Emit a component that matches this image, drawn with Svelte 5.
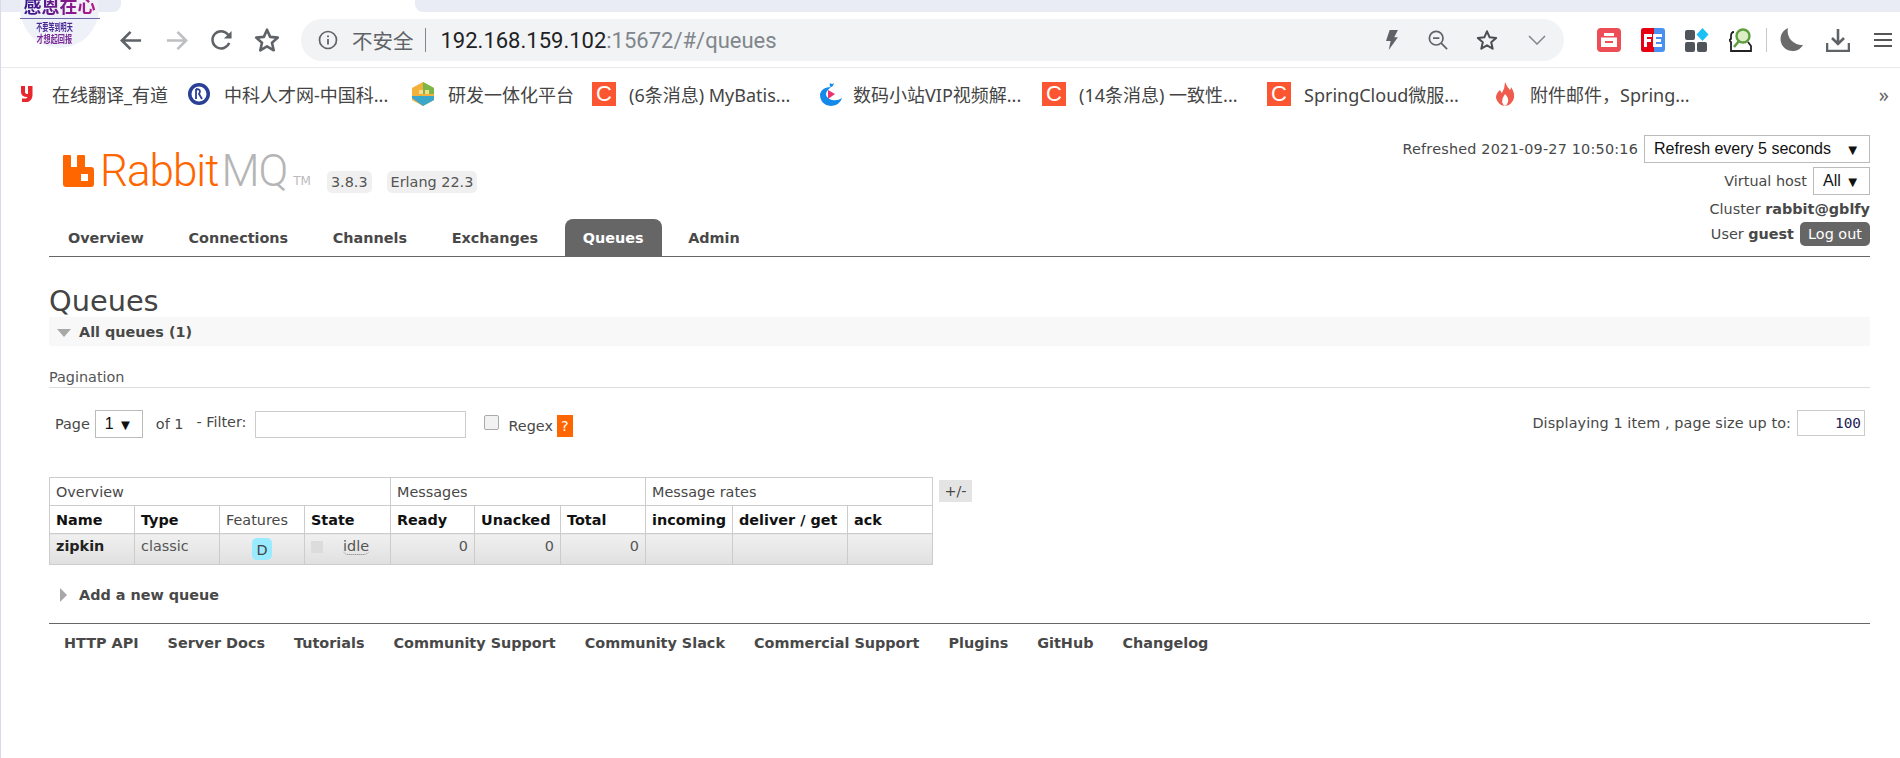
<script>
  const bookmarks = [
    { icon: "youdao", label: "在线翻译_有道", w: 167 },
    { icon: "seal", label: "中科人才网-中国科...", w: 224 },
    { icon: "cube", label: "研发一体化平台", w: 181 },
    { icon: "csdn", label: "(6条消息) MyBatis...", w: 227 },
    { icon: "fish", label: "数码小站VIP视频解...", w: 223 },
    { icon: "csdn", label: "(14条消息) 一致性...", w: 225 },
    { icon: "csdn", label: "SpringCloud微服...", w: 226 },
    { icon: "flame", label: "附件邮件，Spring...", w: 192 },
  ];

  const tabs = ["Overview", "Connections", "Channels", "Exchanges", "Queues", "Admin"];
  const footerLinks = [
    "HTTP API",
    "Server Docs",
    "Tutorials",
    "Community Support",
    "Community Slack",
    "Commercial Support",
    "Plugins",
    "GitHub",
    "Changelog",
  ];
</script>

<div class="shell">
  <div class="avatar">
    <span class="avatar-top">感恩在心</span>
    <span class="avatar-line">不要等到明天</span>
    <span class="avatar-line second">才想起回报</span>
  </div>

  <div class="tabstrip">
    <div class="strip-tab"></div>
    <div class="strip-rest"></div>
  </div>

  <div class="toolbar">
    <svg class="nav back" viewBox="0 0 24 24"><path d="M22 12H3M11 3l-9 9 9 9" fill="none" stroke="#5f6368" stroke-width="2.8" /></svg>
    <svg class="nav forward" viewBox="0 0 24 24"><path d="M2 12h19M13 3l9 9-9 9" fill="none" stroke="#bdbfc2" stroke-width="2.8" /></svg>
    <svg class="nav reload" viewBox="0 0 24 24"><path d="M20 14.5A9 9 0 1 1 18.5 5.5L21 8" fill="none" stroke="#5f6368" stroke-width="2.6" /><path d="M22.5 2v8h-8z" fill="#5f6368" /></svg>
    <svg class="nav star" viewBox="0 0 24 24"><path d="M12 2.5l2.9 6.6 7.1.7-5.4 4.7 1.6 7-6.2-3.7-6.2 3.7 1.6-7L2 9.800l7.100-.7z" fill="none" stroke="#5f6368" stroke-width="2.4" stroke-linejoin="round" /></svg>

    <div class="omnibox">
      <svg class="info" viewBox="0 0 20 20"><circle cx="10" cy="10" r="8.500" fill="none" stroke="#5f6368" stroke-width="1.700" /><path d="M10 9v5.500M10 5.500v1.800" stroke="#5f6368" stroke-width="1.800" /></svg>
      <span class="insecure">不安全</span>
      <span class="sep"></span>
      <span class="url"><span class="host">192.168.159.102</span>:15672/#/queues</span>
      <svg class="omni-icon bolt" viewBox="0 0 16 24"><path d="M6 1h9l-4 8h4L5 23l2-10H2z" fill="#5f6368" /></svg>
      <svg class="omni-icon zoom" viewBox="0 0 22 22"><circle cx="9" cy="9" r="7.500" fill="none" stroke="#5f6368" stroke-width="1.900" /><path d="M5.500 9h7M14.500 14.500L21 21" stroke="#5f6368" stroke-width="1.900" /></svg>
      <svg class="omni-icon ostar" viewBox="0 0 24 24"><path d="M12 2.500l2.900 6.600 7.100.7-5.400 4.700 1.600 7-6.200-3.700-6.200 3.700 1.600-7L2 9.800l7.100-.7z" fill="none" stroke="#4b4e52" stroke-width="2.200" stroke-linejoin="round" /></svg>
      <svg class="omni-icon chev" viewBox="0 0 18 10"><path d="M1 1l8 8 8-8" fill="none" stroke="#80868b" stroke-width="1.500" /></svg>
    </div>

    <div class="extensions">
      <svg viewBox="0 0 24 24"><rect width="24" height="24" rx="4" fill="#ee4d58" /><path d="M7 5h10v3H7zM4 9.500h16V19H4z" fill="#fff" /><path d="M8 14h8" stroke="#ee4d58" stroke-width="2" /></svg>
      <svg class="fe" viewBox="0 0 24 24"><rect width="24" height="24" rx="3" fill="#4a90f0" /><path d="M3 0h10v24H3a3 3 0 0 1-3-3V3a3 3 0 0 1 3-3z" fill="#e60012" /><path d="M3 6h8v3H6v2h4v3H6v5H3z" fill="#fff" /><path d="M12 6h9v3h-6v2h5v3h-5v2h6v3h-9z" fill="#fff" /></svg>
      <svg viewBox="0 0 24 24"><rect x="0" y="2" width="10" height="10" rx="2" fill="#50555b" /><rect x="0" y="14" width="10" height="10" rx="2" fill="#50555b" /><rect x="12" y="14" width="10" height="10" rx="2" fill="#50555b" /><path d="M17.500 0l6 6.500-6 6.500-6-6.500z" fill="#1cc0f5" /></svg>
      <svg viewBox="0 0 24 24"><circle cx="14" cy="8" r="6.500" fill="#dcedc8" stroke="#5f9e3f" stroke-width="2.400" /><path d="M10 13l-5 6" stroke="#5f9e3f" stroke-width="2.600" /><path d="M5 4Q2 4 2 8v3l-2 1 2 2v9h20v-5l-3-4" fill="none" stroke="#222" stroke-width="1.800" /></svg>
      <span class="ext-sep"></span>
      <svg class="moon" viewBox="0 0 24 24"><path d="M9 0a12 12 0 1 0 15 17A14 14 0 0 1 9 0z" fill="#6b6b6b" /></svg>
      <svg viewBox="0 0 24 24"><path d="M1 15v8h22v-8M12 1v14M6 10l6 6 6-6" fill="none" stroke="#5f6368" stroke-width="2.600" /></svg>
      <svg class="burger" viewBox="0 0 18 16"><path d="M0 2h18M0 8h18M0 14h18" stroke="#555" stroke-width="2.200" /></svg>
    </div>
  </div>

  <div class="bookmarks">
    {#each bookmarks as b}
      <div class="bookmark" style="width: {b.w}px">
        {#if b.icon === "youdao"}
          <svg class="bm-icon" viewBox="0 0 16 16"><path d="M1 0h4v6q0 2 3 2V0h4.500v9Q12.500 14 8 16H2v-3.500h4Q7 12 7.500 11 1 11 1 6z" fill="#e8262d" /></svg>
        {:else if b.icon === "seal"}
          <svg class="bm-icon large" viewBox="0 0 24 24"><circle cx="12" cy="12" r="11" fill="#2a3f96" /><circle cx="12" cy="12" r="7.500" fill="#fff" /><path d="M9 7v10M9 7q6 0 3 5l3 5" fill="none" stroke="#2a3f96" stroke-width="1.800" /></svg>
        {:else if b.icon === "cube"}
          <svg class="bm-icon large" viewBox="0 0 24 24"><path d="M12 0l11 6v12l-11 6-11-6V6z" fill="#f1b13a" /><path d="M12 0l11 6v6H12z" fill="#7ab648" /><path d="M1 16l11 8 11-6v-4H1z" fill="#3aa6c9" /><path d="M8 8h4v4H8zM14 8h4v4h-4z" fill="#f6dc8c" /></svg>
        {:else if b.icon === "csdn"}
          <span class="csdn">C</span>
        {:else if b.icon === "fish"}
          <svg class="bm-icon large fish" viewBox="0 0 24 24"><path d="M11 1q-1 3 1 4 Q3 5 1 12q0 11 11 12 9-1 11-8-4 3-10 2Q7 16 7 12q0-3 5-7 2 0 3-4-2 2-4 0z" fill="#1389ea" /><path d="M9 8l7 4-7 5z" fill="#e8336c" /></svg>
        {:else}
          <svg class="bm-icon large" viewBox="0 0 24 24"><path d="M12 0q2 5 5 8 1-1 1-3 4 6 3 11-2 7-9 8-7-1-9-8 0-5 4-8 1 2 2 3 3-5 3-11z" fill="#ef5b4c" /><path d="M12 12q4 4 3 8-1 3-3 4-2-1-3-4 0-4 3-8z" fill="#fff" /></svg>
        {/if}
        <span class="bm-label">{b.label}</span>
      </div>
    {/each}
    <span class="more">»</span>
  </div>

  <main class="page">
    <header class="head">
      <div class="brand">
        <svg class="mark" viewBox="0 0 31 32"><path fill-rule="evenodd" d="M0 1q0-1 1-1h6q1 0 1 1v11h6V1q0-1 1-1h6q1 0 1 1v11h6q3 0 3 3v14q0 3-3 3H3q-3 0-3-3zM18 19h7v7h-7z" fill="#f60" /></svg>
        <span class="word"><span class="rabbit">Rabbit</span><span class="mq">MQ</span></span>
        <span class="tm">TM</span>
        <span class="badge first">3.8.3</span>
        <span class="badge">Erlang 22.3</span>
      </div>
      <div class="status">
        <div class="status-row">
          <span class="refreshed">Refreshed 2021-09-27 10:50:16</span>
          <div class="pick refresh"><span>Refresh every 5 seconds</span><i>▼</i></div>
        </div>
        <div class="status-row">
          <span>Virtual host</span>
          <div class="pick vhost"><span>All</span><i>▼</i></div>
        </div>
        <div class="status-row cluster">Cluster&nbsp;<b>rabbit@gblfy</b></div>
        <div class="status-row user">
          <span>User&nbsp;<b>guest</b></span>
          <span class="logout">Log out</span>
        </div>
      </div>
    </header>

    <nav class="tabs">
      {#each tabs as t}
        <span class="tab" class:active={t === "Queues"}>{t}</span>
      {/each}
    </nav>

    <h1>Queues</h1>
    <div class="section-bar"><span class="tri-down"></span>All queues (1)</div>

    <div class="pagination-label">Pagination</div>

    <div class="filters">
      <span>Page</span>
      <div class="pick page-pick"><span>1</span><i>▼</i></div>
      <span class="of">of 1</span>
      <span class="filter-label">- Filter:</span>
      <div class="input filter"></div>
      <span class="check"></span>
      <span class="regex">Regex</span>
      <span class="help">?</span>
      <span class="displaying">Displaying 1 item , page size up to:</span>
      <div class="input size">100</div>
    </div>

    <div class="table-wrap">
      <table>
        <colgroup>
          <col style="width: 85px" /><col style="width: 85px" /><col style="width: 85px" /><col style="width: 86px" />
          <col style="width: 84px" /><col style="width: 86px" /><col style="width: 85px" />
          <col style="width: 87px" /><col style="width: 115px" /><col style="width: 85px" />
        </colgroup>
        <thead>
          <tr class="group">
            <th colspan="4">Overview</th>
            <th colspan="3">Messages</th>
            <th colspan="3">Message rates</th>
          </tr>
          <tr class="cols">
            <th>Name</th>
            <th>Type</th>
            <th class="plain">Features</th>
            <th>State</th>
            <th>Ready</th>
            <th>Unacked</th>
            <th>Total</th>
            <th>incoming</th>
            <th>deliver / get</th>
            <th>ack</th>
          </tr>
        </thead>
        <tbody>
          <tr>
            <td class="name">zipkin</td>
            <td>classic</td>
            <td class="center"><span class="feature">D</span></td>
            <td class="state"><span class="dot"></span><span class="idle">idle</span></td>
            <td class="num">0</td>
            <td class="num">0</td>
            <td class="num">0</td>
            <td></td>
            <td></td>
            <td></td>
          </tr>
        </tbody>
      </table>
      <span class="plus-minus">+/-</span>
    </div>

    <div class="add-queue"><span class="tri-right"></span>Add a new queue</div>

    <footer>
      {#each footerLinks as link}
        <span>{link}</span>
      {/each}
    </footer>
  </main>
</div>

<style>
  :global(body) {
    margin: 0;
    background: #fff;
  }

  .shell {
    position: relative;
    height: 758px;
    overflow: hidden;
    border-left: 1px solid #d8dbe6;
    box-sizing: border-box;
    font-family: "DejaVu Sans", Verdana, sans-serif;
    font-size: 14.4px;
    color: #484848;
  }

  /* profile picture hangs over the tab strip */
  .avatar {
    position: absolute;
    left: 19px;
    top: -31px;
    width: 79px;
    height: 79px;
    border-radius: 50%;
    background: #eef1f8;
    display: flex;
    flex-direction: column;
    align-items: center;
    color: #4a2a96;
    font-family: "Noto Sans CJK SC", sans-serif;
    font-weight: 700;
    font-size: 10.5px;
    line-height: 12px;
    z-index: 2;
  }

  .avatar-top {
    margin-top: 24px;
    margin-bottom: 2px;
    padding: 0 4px 1px;
    font-size: 18px;
    line-height: 24px;
    white-space: nowrap;
    background: linear-gradient(90deg, #2a1a8a, #c0188a);
    -webkit-background-clip: text;
    background-clip: text;
    color: transparent;
    border-bottom: 1px solid #6a6aa8;
  }

  .avatar-line {
    white-space: nowrap;
    margin-right: 10px;
    transform: scaleX(0.58);
  }

  .avatar-line.second {
    color: #7a2a96;
    transform: scaleX(0.68);
  }

  .tabstrip {
    display: flex;
    height: 12px;
  }

  .strip-tab {
    width: 120px;
    background: #e9ecf4;
    border-bottom-right-radius: 8px;
  }

  .strip-rest {
    flex: 1;
    margin-left: 294px;
    background: #e9ecf4;
    border-bottom-left-radius: 8px;
  }

  .toolbar {
    position: relative;
    display: flex;
    align-items: center;
    height: 56px;
    box-sizing: border-box;
    border-bottom: 1px solid #e9e9e9;
    padding-left: 119px;
    font-family: "Noto Sans", "Noto Sans CJK SC", sans-serif;
  }

  .nav {
    width: 23px;
    height: 23px;
    flex: none;
    margin-top: 1px;
  }

  .forward {
    margin-left: 22px;
  }

  .reload {
    margin-left: 22px;
  }

  .star {
    margin-left: 21px;
    width: 26px;
    height: 26px;
  }

  .omnibox {
    display: flex;
    align-items: center;
    width: 1263px;
    height: 42px;
    margin-left: 21px;
    margin-top: 1px;
    border-radius: 21px;
    background: #f1f3f4;
    flex: none;
  }

  .info {
    width: 20px;
    height: 20px;
    margin-left: 17px;
  }

  .insecure {
    margin-left: 14px;
    font-family: "Noto Sans CJK SC", sans-serif;
    font-size: 20.5px;
    color: #5f6368;
  }

  .sep {
    width: 1px;
    height: 24px;
    margin: 0 15px 0 11px;
    background: #80868b;
  }

  .url {
    font-family: Roboto, "Noto Sans", sans-serif;
    font-size: 22px;
    color: #80868b;
    flex: 1;
    white-space: nowrap;
  }

  .host {
    color: #202124;
  }

  .omni-icon {
    flex: none;
  }

  .bolt {
    width: 15px;
    height: 22px;
    margin-right: 29px;
  }

  .zoom {
    width: 20px;
    height: 20px;
    margin-right: 28px;
  }

  .ostar {
    width: 22px;
    height: 22px;
    margin-right: 30px;
  }

  .chev {
    width: 18px;
    height: 10px;
    margin-right: 18px;
  }

  .extensions {
    display: flex;
    align-items: center;
    margin-left: 33px;
    gap: 20px;
  }

  .extensions svg {
    width: 24px;
    height: 24px;
    flex: none;
  }

  .extensions .moon {
    margin-right: 3px;
  }

  .extensions .burger {
    width: 18px;
    height: 16px;
    margin-left: 4px;
  }

  .ext-sep {
    width: 1px;
    height: 24px;
    margin: 0 -8px 0 -7px;
    background: #c8c8c8;
  }

  .bookmarks {
    display: flex;
    align-items: center;
    height: 52px;
    padding-left: 19px;
    font-family: "Noto Sans", "Noto Sans CJK SC", sans-serif;
    font-size: 18px;
    color: #444;
    position: relative;
  }

  .bookmark {
    display: flex;
    align-items: center;
    flex: none;
    white-space: nowrap;
  }

  .bm-icon {
    width: 16px;
    height: 16px;
    flex: none;
    margin-right: 16px;
  }

  .bm-icon.large {
    width: 24px;
    height: 24px;
    margin-right: 13px;
  }

  .bm-icon.large.fish {
    margin-right: 10px;
  }

  .csdn {
    width: 24px;
    height: 24px;
    margin-right: 13px;
    flex: none;
    background: #fc5531;
    color: #fff;
    text-align: center;
    font-size: 22px;
    line-height: 24px;
    font-family: "Liberation Sans", sans-serif;
  }

  .more {
    margin-left: auto;
    margin-right: 11px;
    font-size: 20px;
    color: #666;
  }

  .page {
    padding: 0 30px 0 48px;
  }

  .head {
    display: flex;
    justify-content: space-between;
    align-items: flex-start;
    height: 99px;
    padding-top: 16px;
    box-sizing: border-box;
    margin-top: -1px;
  }

  .brand {
    display: flex;
    align-items: flex-end;
    margin: 16px 0 0 14px;
    height: 41px;
  }

  .mark {
    width: 31px;
    height: 32px;
    flex: none;
    margin-bottom: 5px;
  }

  .word {
    margin-left: 6px;
    font-family: Roboto, "Liberation Sans", sans-serif;
    font-weight: 300;
    font-size: 44px;
    line-height: 41px;
    letter-spacing: -1px;
  }

  .rabbit {
    color: #f60;
  }

  .mq {
    color: #b5b5b5;
    margin-left: 3px;
  }

  .tm {
    margin: 0 0 5px 6px;
    font-size: 12px;
    line-height: 11px;
    color: #bbb;
  }

  .badge {
    margin-left: 15px;
    padding: 0 4px;
    height: 22px;
    line-height: 22px;
    border-radius: 5px;
    background: #f0f0f0;
    font-size: 14.4px;
    color: #555;
    position: relative;
    top: 1px;
  }

  .badge.first {
    margin-left: 16px;
  }

  .status {
    display: flex;
    flex-direction: column;
    align-items: flex-end;
  }

  .status-row {
    display: flex;
    align-items: center;
    justify-content: flex-end;
    gap: 6px;
  }

  .status-row + .status-row {
    margin-top: 4px;
  }

  .status-row.cluster {
    gap: 0;
    margin-top: 3px;
    height: 21px;
  }

  .status-row.user {
    margin-top: 3px;
  }

  .refreshed {
    letter-spacing: 0.2px;
  }

  .pick {
    display: flex;
    align-items: center;
    justify-content: space-between;
    box-sizing: border-box;
    height: 28px;
    border: 1px solid #bbb;
    background: #fff;
    font-family: "Liberation Sans", Arial, sans-serif;
    font-size: 16px;
    color: #111;
    padding: 0 9px;
  }

  .pick i {
    font-style: normal;
    font-size: 15px;
  }

  .refresh {
    width: 226px;
  }

  .vhost {
    width: 57px;
  }

  .page-pick {
    width: 48px;
    margin-left: 5px;
  }

  .logout {
    width: 70px;
    height: 24px;
    line-height: 24px;
    text-align: center;
    border-radius: 5px;
    background: #666;
    color: #fff;
  }

  .tabs {
    display: flex;
    align-items: flex-end;
    height: 38px;
    border-bottom: 1px solid #666;
    gap: 8.6px;
    padding-left: 1px;
  }

  .tab {
    height: 37px;
    line-height: 38px;
    padding: 0 18px;
    font-weight: 700;
    border-radius: 8px 8px 0 0;
    color: #484848;
  }

  .tab.active {
    background: #666;
    color: #fff;
  }

  h1 {
    margin: 29px 0 0;
    font-size: 28.8px;
    line-height: 31px;
    font-weight: 400;
    color: #444;
  }

  .section-bar {
    display: flex;
    align-items: center;
    height: 29px;
    background: #f8f8f8;
    font-weight: 700;
  }

  .tri-down {
    width: 0;
    height: 0;
    margin: 2px 8px 0 8px;
    border-left: 7px solid transparent;
    border-right: 7px solid transparent;
    border-top: 8px solid #a8a8a8;
  }

  .pagination-label {
    margin-top: 22px;
    height: 19px;
    line-height: 19px;
    border-bottom: 1px solid #ddd;
    color: #555;
  }

  .filters {
    display: flex;
    align-items: center;
    height: 28px;
    margin-top: 22px;
    padding: 0 5px 0 6px;
  }

  .of {
    margin-left: 13px;
  }

  .filter-label {
    margin: -4px 0 0 13px;
  }

  .input {
    box-sizing: border-box;
    border: 1px solid #ccc;
    background: #fff;
  }

  .filter {
    width: 211px;
    height: 27px;
    margin-left: 9px;
  }

  .check {
    width: 13px;
    height: 13px;
    margin: -3px 0 0 18px;
    border: 1px solid #aaa;
    border-radius: 2px;
    background: #f2f2f2;
  }

  .regex {
    margin: 3px 0 0 9px;
  }

  .help {
    width: 16px;
    height: 22px;
    line-height: 22px;
    margin: 3px 0 0 4px;
    text-align: center;
    background: #f60;
    color: #fff;
  }

  .displaying {
    margin-left: auto;
    margin-top: -3px;
    letter-spacing: 0.1px;
  }

  .size {
    width: 68px;
    height: 26px;
    line-height: 24px;
    margin: -3px 0 0 6px;
    text-align: right;
    padding-right: 3px;
    font-family: "DejaVu Sans Mono", monospace;
    color: #222255;
  }

  .table-wrap {
    display: flex;
    align-items: flex-start;
    gap: 6px;
    margin-top: 39px;
  }

  table {
    border-collapse: collapse;
    table-layout: fixed;
    width: 884px;
    flex: none;
  }

  th,
  td {
    border: 1px solid #ccc;
    padding: 0 6px;
    text-align: left;
    white-space: nowrap;
    overflow: hidden;
  }

  .group th {
    height: 27px;
    font-weight: 400;
    color: #484848;
  }

  .cols th {
    height: 26px;
    padding-top: 1px;
    font-weight: 700;
    color: #111;
  }

  .cols th.plain {
    font-weight: 400;
    color: #484848;
  }

  tbody td {
    height: 23px;
    padding-bottom: 7px;
    background: linear-gradient(#f0f0f0, #e0e0e0);
    color: #555;
  }

  td.name {
    font-weight: 700;
    color: #222;
  }

  td.center {
    text-align: center;
    padding-bottom: 0;
  }

  td.num {
    text-align: right;
  }

  .feature {
    display: inline-block;
    width: 20px;
    height: 22px;
    line-height: 24px;
    border-radius: 5px;
    background: #99ebff;
    color: #444;
  }

  td.state {
    position: relative;
    padding-left: 6px;
  }

  .dot {
    display: inline-block;
    width: 12px;
    height: 12px;
    background: #dcdcdc;
    vertical-align: -2px;
  }

  .idle {
    margin-left: 20px;
    border-bottom: 1px dotted #777;
    border-radius: 0 0 5px 5px;
  }

  .plus-minus {
    width: 33px;
    height: 22px;
    line-height: 22px;
    margin-top: 3px;
    text-align: center;
    background: #e4e4e4;
  }

  .add-queue {
    display: flex;
    align-items: center;
    height: 20px;
    margin-top: 20px;
    font-weight: 700;
  }

  .tri-right {
    width: 0;
    height: 0;
    margin: 0 12px 0 11px;
    border-top: 7px solid transparent;
    border-bottom: 7px solid transparent;
    border-left: 7px solid #a8a8a8;
  }

  footer {
    display: flex;
    gap: 29px;
    margin-top: 18px;
    padding: 10px 15px 0;
    border-top: 1px solid #666;
    font-weight: 700;
    line-height: 19px;
  }
</style>
